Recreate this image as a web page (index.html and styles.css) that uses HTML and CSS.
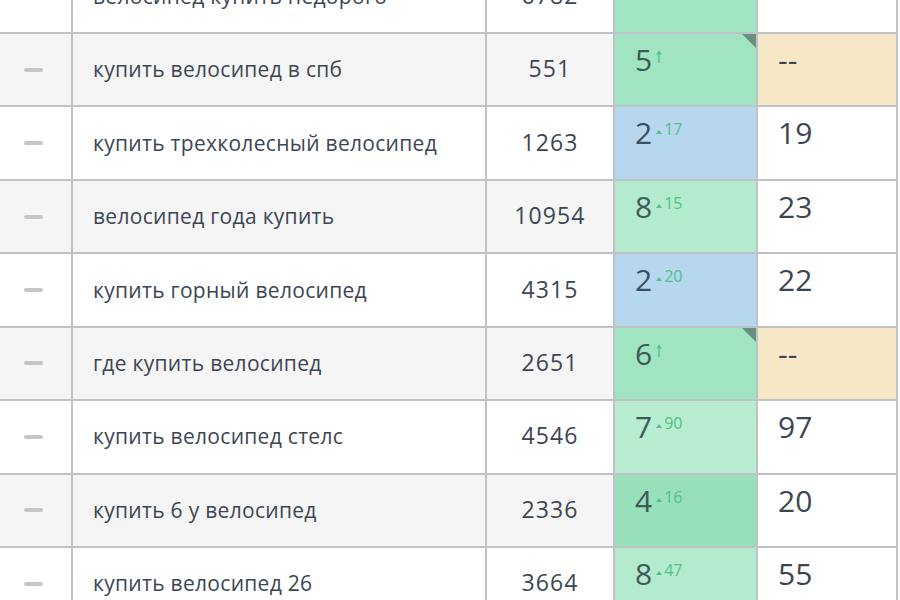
FILE: index.html
```html
<!DOCTYPE html>
<html>
<head>
<meta charset="utf-8">
<link rel="stylesheet" href="styles.css">
</head>
<body>
<div class="table">
  <div class="row">
    <div class="cell c-icon"><span class="dash"></span></div>
    <div class="cell c-kw">велосипед купить недорого</div>
    <div class="cell c-num">6782</div>
    <div class="cell c-pos g1"></div>
    <div class="cell c-last"></div>
  </div>
  <div class="row stripe">
    <div class="cell c-icon"><span class="dash"></span></div>
    <div class="cell c-kw">купить велосипед в спб</div>
    <div class="cell c-num">551</div>
    <div class="cell c-pos g1 corner">5<span class="up"><svg width="6" height="14" viewBox="0 0 6 14"><path d="M3 13V2M1 4.5L3 1.5L5 4.5" fill="none" stroke="#3fbf7a" stroke-width="1.1"/></svg></span></div>
    <div class="cell c-last new">--</div>
  </div>
  <div class="row">
    <div class="cell c-icon"><span class="dash"></span></div>
    <div class="cell c-kw">купить трехколесный велосипед</div>
    <div class="cell c-num">1263</div>
    <div class="cell c-pos blue">2<span class="delta"><i class="tri"></i>17</span></div>
    <div class="cell c-last">19</div>
  </div>
  <div class="row stripe">
    <div class="cell c-icon"><span class="dash"></span></div>
    <div class="cell c-kw">велосипед года купить</div>
    <div class="cell c-num">10954</div>
    <div class="cell c-pos g2">8<span class="delta"><i class="tri"></i>15</span></div>
    <div class="cell c-last">23</div>
  </div>
  <div class="row">
    <div class="cell c-icon"><span class="dash"></span></div>
    <div class="cell c-kw">купить горный велосипед</div>
    <div class="cell c-num">4315</div>
    <div class="cell c-pos blue">2<span class="delta"><i class="tri"></i>20</span></div>
    <div class="cell c-last">22</div>
  </div>
  <div class="row stripe">
    <div class="cell c-icon"><span class="dash"></span></div>
    <div class="cell c-kw">где купить велосипед</div>
    <div class="cell c-num">2651</div>
    <div class="cell c-pos g1 corner">6<span class="up"><svg width="6" height="14" viewBox="0 0 6 14"><path d="M3 13V2M1 4.5L3 1.5L5 4.5" fill="none" stroke="#3fbf7a" stroke-width="1.1"/></svg></span></div>
    <div class="cell c-last new">--</div>
  </div>
  <div class="row">
    <div class="cell c-icon"><span class="dash"></span></div>
    <div class="cell c-kw">купить велосипед стелс</div>
    <div class="cell c-num">4546</div>
    <div class="cell c-pos g3">7<span class="delta"><i class="tri"></i>90</span></div>
    <div class="cell c-last">97</div>
  </div>
  <div class="row stripe">
    <div class="cell c-icon"><span class="dash"></span></div>
    <div class="cell c-kw">купить 6 у велосипед</div>
    <div class="cell c-num">2336</div>
    <div class="cell c-pos g4">4<span class="delta"><i class="tri"></i>16</span></div>
    <div class="cell c-last">20</div>
  </div>
  <div class="row">
    <div class="cell c-icon"><span class="dash"></span></div>
    <div class="cell c-kw">купить велосипед 26</div>
    <div class="cell c-num">3664</div>
    <div class="cell c-pos g2">8<span class="delta"><i class="tri"></i>47</span></div>
    <div class="cell c-last">55</div>
  </div>
</div>
</body>
</html>
```
FILE: styles.css
```css
html, body {
  margin: 0;
  padding: 0;
  background: #ffffff;
  overflow: hidden;
  height: 600px;
}
body {
  font-family: "Open Sans", "Liberation Sans", sans-serif;
  color: #3c4652;
}
.table {
  margin-top: -39.4px;
  width: 898px;
}
.row {
  display: grid;
  grid-template-columns: 73px 414px 128px 143px 140px;
  height: 73.43px;
  box-sizing: border-box;
  border-bottom: 2px solid #bfc3c7;
  background: #ffffff;
}
.row.stripe {
  background: #f5f5f6;
}
.cell {
  border-right: 2px solid #bfc3c7;
  box-sizing: border-box;
  position: relative;
}
.c-icon {
  display: flex;
  align-items: center;
  justify-content: center;
}
.dash {
  display: block;
  width: 19px;
  height: 4px;
  border-radius: 2px;
  background: #c6c6c8;
  margin-right: 4px;
}
.c-kw {
  display: flex;
  align-items: center;
  padding-left: 20px;
  padding-bottom: 1px;
  font-size: 21px;
  letter-spacing: 0.3px;
  white-space: nowrap;
  overflow: hidden;
}
.c-num {
  display: flex;
  align-items: center;
  justify-content: center;
  font-size: 23px;
  letter-spacing: 1.1px;
  padding-bottom: 3px;
}
.c-pos, .c-last {
  font-size: 30px;
  line-height: 40px;
  padding-top: 6px;
  padding-left: 20px;
  background: #ffffff;
}
.c-pos {
  color: #3d5a58;
}
.g1 { background: #a0e4c1; }
.g2 { background: #b4ebcf; }
.g3 { background: #b8edd2; }
.g4 { background: #97e0b9; }
.blue { background: #b7d7ef; color: #3a4f66; }
.new { background: #f6e8c6; }
.corner::after {
  content: "";
  position: absolute;
  top: 0;
  right: 0;
  border-style: solid;
  border-width: 0 14px 14px 0;
  border-color: transparent #6a8f80 transparent transparent;
}
.delta {
  display: inline-block;
  vertical-align: top;
  font-size: 16px;
  line-height: 16px;
  color: #4fc287;
  margin-left: 4px;
  margin-top: 8px;
}
.tri {
  display: inline-block;
  width: 0;
  height: 0;
  border-left: 3px solid transparent;
  border-right: 3px solid transparent;
  border-bottom: 4px solid #4fc287;
  margin-right: 2px;
  vertical-align: 1px;
}
.up {
  display: inline-block;
  vertical-align: top;
  margin-left: 4px;
  margin-top: 10px;
  line-height: 0;
}
```
